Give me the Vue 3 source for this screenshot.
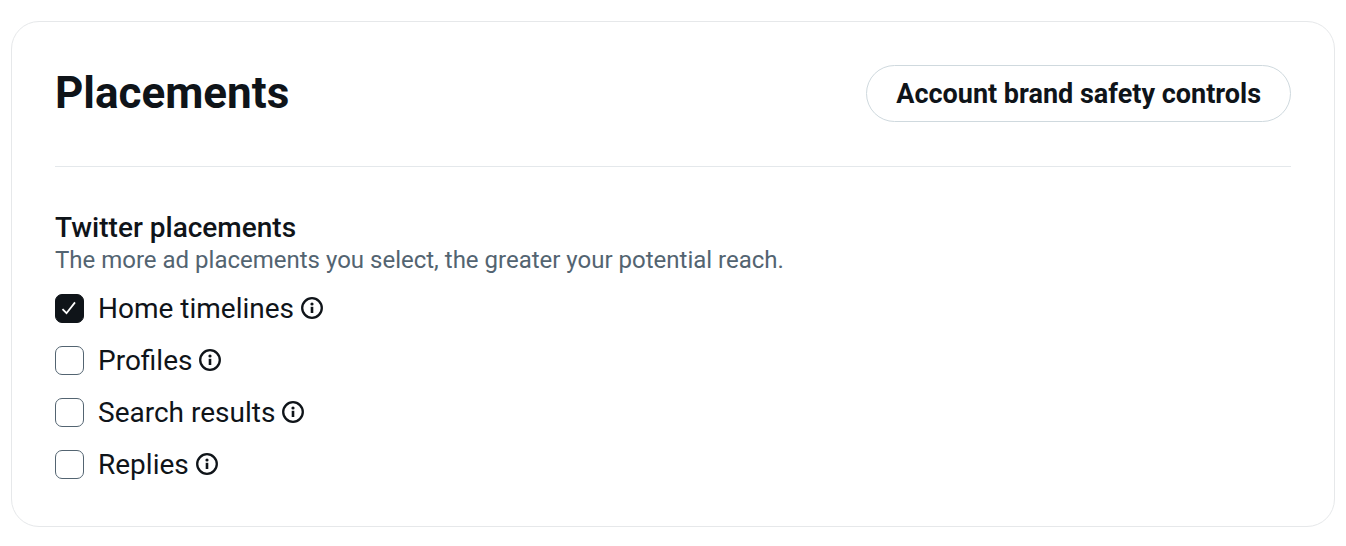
<script setup>
import { ref } from 'vue'

const placements = ref([
  { id: 'home', label: 'Home timelines', checked: true },
  { id: 'profiles', label: 'Profiles', checked: false },
  { id: 'search', label: 'Search results', checked: false },
  { id: 'replies', label: 'Replies', checked: false },
])
</script>

<template>
  <main class="card">
    <header class="header">
      <h1 class="title">Placements</h1>
      <button type="button" class="pill">Account brand safety controls</button>
    </header>

    <section class="group" aria-labelledby="group-title">
      <h2 id="group-title" class="group-title">Twitter placements</h2>
      <p class="hint">The more ad placements you select, the greater your potential reach.</p>

      <ul class="options">
        <li v-for="p in placements" :key="p.id" class="option">
          <span class="box">
            <input :id="p.id" v-model="p.checked" type="checkbox" class="check" />
            <svg class="tick" viewBox="0 0 29 29" aria-hidden="true">
              <path d="M7.5 15.2l4 4L20 8.4" />
            </svg>
          </span>
          <label :for="p.id" class="label">{{ p.label }}</label>
          <button type="button" class="info" :aria-label="'About ' + p.label">
            <svg viewBox="0 0 22 22" aria-hidden="true">
              <circle class="ring" cx="11" cy="11" r="9.8" />
              <circle cx="11" cy="7" r="1.6" />
              <rect x="9.7" y="9.8" width="2.6" height="6.2" />
            </svg>
          </button>
        </li>
      </ul>
    </section>
  </main>
</template>

<style>
body {
  background: #fff;
}
</style>

<style scoped>
.card {
  margin: 21px 11px;
  padding: 43px 43px 36px;
  border: 1px solid #e6e8ea;
  border-radius: 28px;
  color: #0f1419;
  font-family: Roboto, "Liberation Sans", sans-serif;
}

.header {
  display: flex;
  align-items: center;
  justify-content: space-between;
  padding-bottom: 44px;
  border-bottom: 1px solid #e4e8eb;
}

.title {
  margin: 0;
  padding-bottom: 2px;
  font-size: 44px;
  line-height: 54px;
  font-weight: 700;
}

.pill {
  padding: 2px 29px 0;
  border: 1px solid #cfd9de;
  border-radius: 29px;
  background: #fff;
  color: inherit;
  font-family: inherit;
  font-size: 27px;
  font-weight: 700;
  line-height: 53px;
}

.group {
  padding-top: 45px;
}

.group-title {
  margin: 0;
  font-size: 28px;
  font-weight: 500;
  line-height: 32px;
}

.hint {
  margin: 0;
  color: #536471;
  font-size: 24px;
  line-height: 32px;
}

.options {
  margin: 6px 0 0;
  padding: 0;
  list-style: none;
}

.option {
  display: flex;
  align-items: center;
  height: 52px;
}

.box {
  position: relative;
  width: 29px;
  height: 29px;
}

.check {
  display: block;
  appearance: none;
  width: 100%;
  height: 100%;
  margin: 0;
  border: 1px solid #536471;
  border-radius: 7px;
  background: #fff;
}

.check:checked {
  border-color: #0f1419;
  background: #0f1419;
}

.tick {
  position: absolute;
  inset: 0;
  fill: none;
  stroke: #fff;
  stroke-width: 1.8;
  pointer-events: none;
}

.label {
  margin-left: 14px;
  padding-top: 2px;
  font-size: 28px;
  line-height: 36px;
}

.info {
  margin-left: 7px;
  padding: 0;
  border: 0;
  background: none;
  color: inherit;
}

.info svg {
  display: block;
  width: 22px;
  height: 22px;
  fill: currentColor;
}

.info .ring {
  fill: none;
  stroke: currentColor;
  stroke-width: 2.3;
}
</style>
